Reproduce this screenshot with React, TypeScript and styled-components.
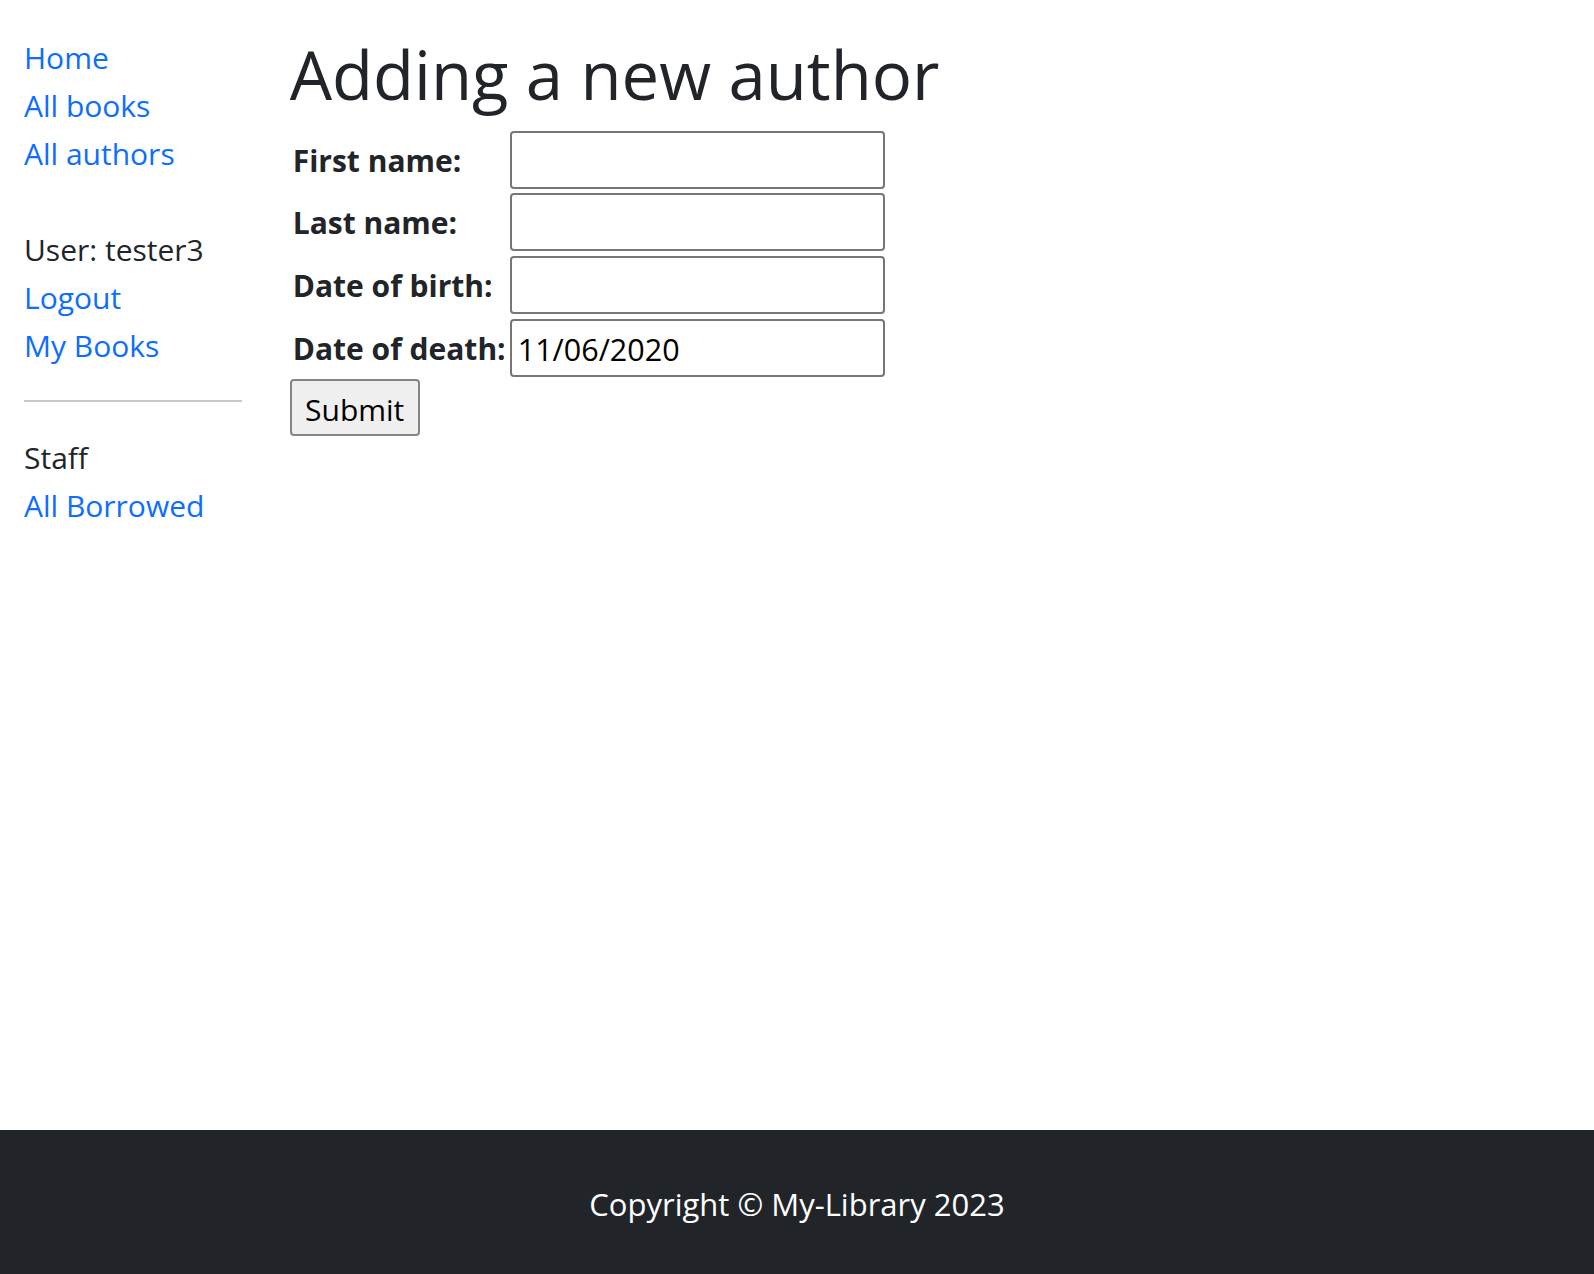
import React from "react";
import styled, { createGlobalStyle } from "styled-components";

const GlobalStyle = createGlobalStyle`
  html, body {
    margin: 0;
    padding: 0;
    background: #ffffff;
  }
  body {
    font-family: "Open Sans", "Noto Sans", "Liberation Sans", sans-serif;
    font-size: 30px;
    line-height: 48px;
    color: #212529;
  }
  * { box-sizing: border-box; }
`;

const Page = styled.div`
  display: flex;
  flex-direction: column;
  min-height: 100vh;
`;

const Content = styled.div`
  display: flex;
  flex-direction: row;
  padding-top: 34px;
  flex: 1;
`;

const Sidebar = styled.nav`
  width: 265.7px;
  flex: 0 0 265.7px;
  padding: 0 24px;
`;

const NavList = styled.ul<{ $gapAfter?: boolean }>`
  list-style: none;
  margin: 0 0 ${(p) => (p.$gapAfter ? "48px" : "0")} 0;
  padding: 0;
`;

const NavItem = styled.li`
  height: 48px;
  white-space: nowrap;
`;

const NavLink = styled.a`
  color: #0d6efd;
  text-decoration: none;
`;

const Divider = styled.hr`
  margin: 30px 0 32px 0;
  border: 0;
  border-top: 2px solid #212529;
  opacity: 0.25;
`;

const Main = styled.main`
  flex: 1;
  padding: 0 24px;
`;

const Title = styled.h1`
  margin: 0 0 15px 0;
  font-size: 67px;
  line-height: 81.6px;
  font-weight: 500;
  color: #212529;
  white-space: nowrap;
`;

const FormGrid = styled.form`
  display: grid;
  grid-template-columns: 220px 375px;
  row-gap: 4.67px;
  align-items: center;
  justify-items: start;
`;

const Label = styled.label`
  font-weight: 700;
  padding-left: 3px;
  padding-top: 2px;
  white-space: nowrap;
`;

const TextInput = styled.input`
  width: 375px;
  height: 58px;
  border: 2px solid #767676;
  border-radius: 4px;
  padding: 2px 6px 0 6px;
  font-family: inherit;
  font-size: 30.5px;
  line-height: 48px;
  color: #000000;
  background: #ffffff;
  outline: none;
`;

const SubmitButton = styled.button`
  grid-column: 1 / 2;
  width: 130px;
  height: 57px;
  margin-top: -2.5px;
  border: 2px solid #858585;
  border-radius: 4px;
  background: #efefef;
  font-family: inherit;
  font-size: 30px;
  line-height: 48px;
  color: #000000;
  padding: 5px 12px 0 12px;
`;

const Footer = styled.footer`
  height: 144px;
  background: #212529;
  color: #ffffff;
  display: flex;
  align-items: center;
  justify-content: center;
  font-size: 31px;
  padding-top: 4px;
`;

export default function App() {
  return (
    <>
      <GlobalStyle />
      <Page>
        <Content>
          <Sidebar>
            <NavList $gapAfter>
              <NavItem><NavLink href="#">Home</NavLink></NavItem>
              <NavItem><NavLink href="#">All books</NavLink></NavItem>
              <NavItem><NavLink href="#">All authors</NavLink></NavItem>
            </NavList>
            <NavList>
              <NavItem>User: tester3</NavItem>
              <NavItem><NavLink href="#">Logout</NavLink></NavItem>
              <NavItem><NavLink href="#">My Books</NavLink></NavItem>
            </NavList>
            <Divider />
            <NavList>
              <NavItem>Staff</NavItem>
              <NavItem><NavLink href="#">All Borrowed</NavLink></NavItem>
            </NavList>
          </Sidebar>
          <Main>
            <Title>Adding a new author</Title>
            <FormGrid onSubmit={(e) => e.preventDefault()}>
              <Label htmlFor="first">First name:</Label>
              <TextInput id="first" type="text" />
              <Label htmlFor="last">Last name:</Label>
              <TextInput id="last" type="text" />
              <Label htmlFor="birth">Date of birth:</Label>
              <TextInput id="birth" type="text" />
              <Label htmlFor="death">Date of death:</Label>
              <TextInput id="death" type="text" defaultValue="11/06/2020" />
              <SubmitButton type="submit">Submit</SubmitButton>
            </FormGrid>
          </Main>
        </Content>
        <Footer>Copyright © My-Library 2023</Footer>
      </Page>
    </>
  );
}
